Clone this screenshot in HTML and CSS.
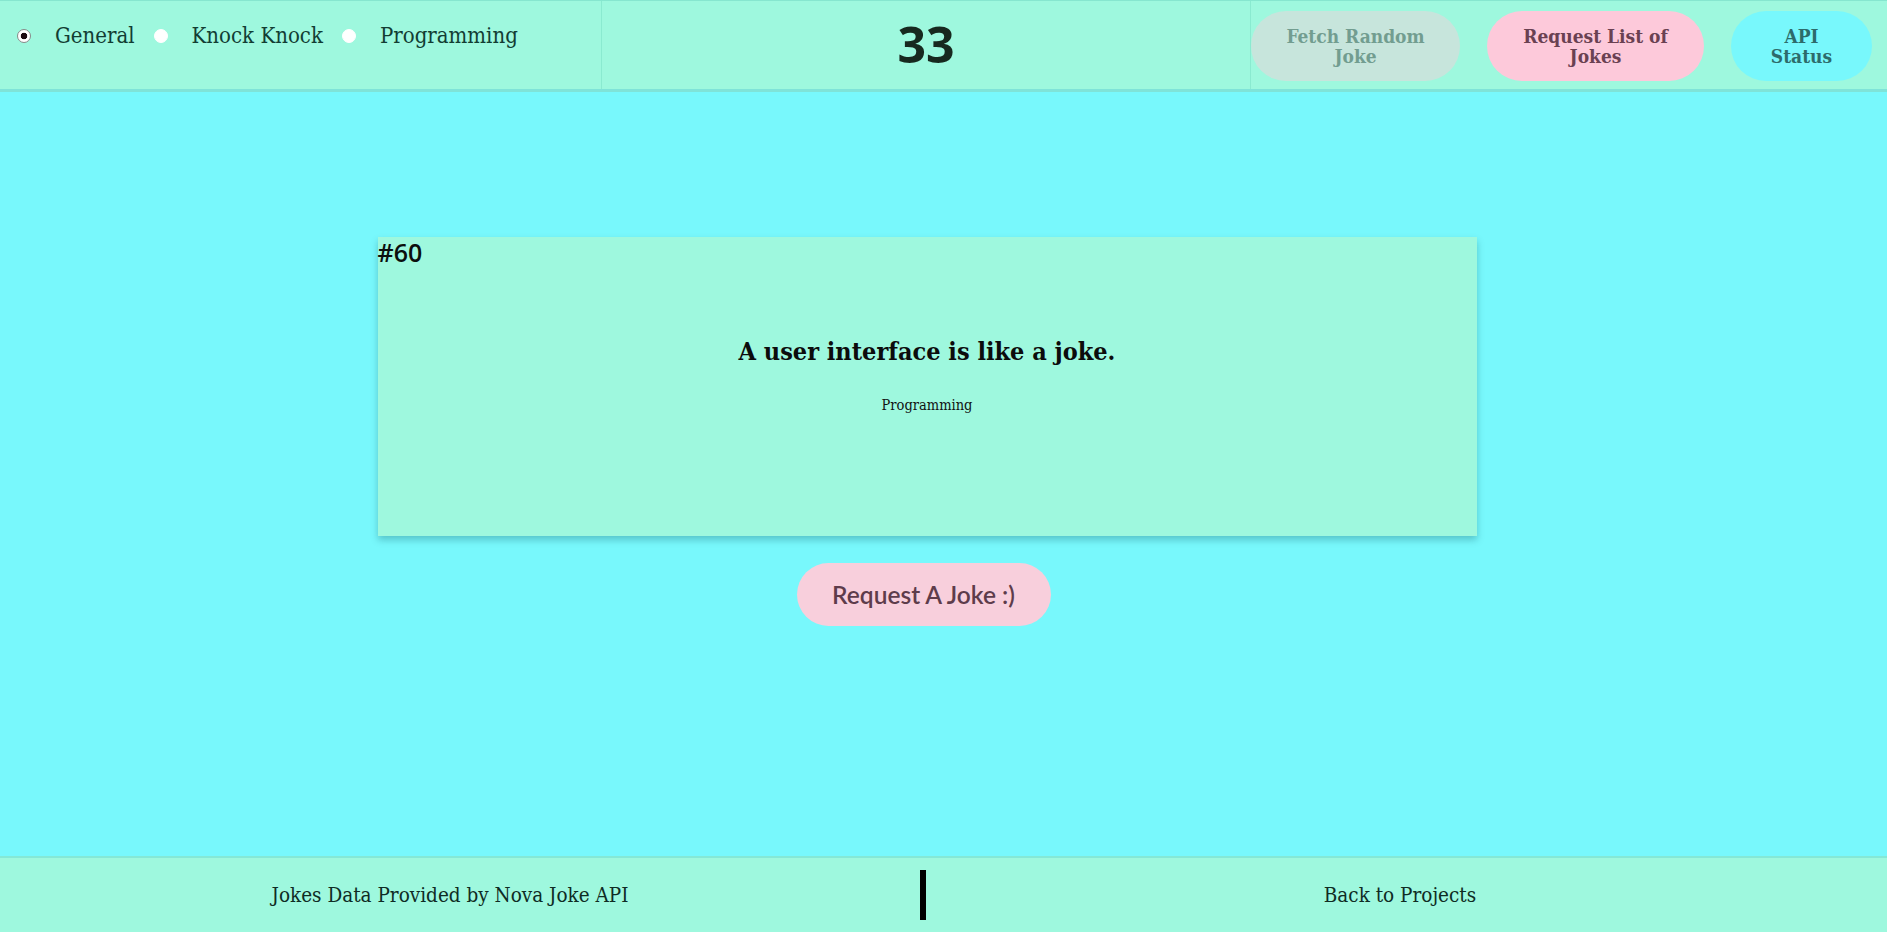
FILE: index.html
```html
<!DOCTYPE html>
<html lang="en">
<head>
<meta charset="utf-8">
<title>Jokes</title>
<link rel="stylesheet" href="styles.css">
</head>
<body>
<header class="topbar">
  <div class="topbar__types">
    <label class="type"><input type="radio" name="type" class="type__radio" checked><span class="type__label">General</span></label>
    <label class="type"><input type="radio" name="type" class="type__radio"><span class="type__label">Knock Knock</span></label>
    <label class="type"><input type="radio" name="type" class="type__radio"><span class="type__label">Programming</span></label>
  </div>
  <div class="topbar__count">33</div>
  <div class="topbar__actions">
    <button class="pill pill--fetch">Fetch Random Joke</button>
    <button class="pill pill--list">Request List of Jokes</button>
    <button class="pill pill--status">API Status</button>
  </div>
</header>
<main class="stage">
  <article class="card">
    <div class="card__id">#60</div>
    <div class="card__body">
      <h2 class="card__setup">A user interface is like a joke.</h2>
      <p class="card__type">Programming</p>
    </div>
  </article>
  <button class="request">Request A Joke :)</button>
</main>
<footer class="footer">
  <div class="footer__cell">Jokes Data Provided by Nova Joke API</div>
  <div class="footer__bar"><span class="footer__pipe"></span></div>
  <div class="footer__cell">Back to Projects</div>
</footer>
</body>
</html>
```
FILE: styles.css
```css
* { box-sizing: border-box; }
html, body { height: 100%; }
body {
  margin: 0;
  background: #78f8fc;
  font-family: "DejaVu Serif Condensed", "DejaVu Serif", serif;
  color: #123a30;
  display: flex;
  flex-direction: column;
  height: 932px;
  overflow: hidden;
}
.topbar {
  display: grid;
  grid-template-columns: 602px 649px 1fr;
  height: 92px;
  background: #9ef8de;
  border-top: 1px solid #86e6cf;
  border-bottom: 3px solid #7fe3d8;
}
.topbar__types {
  display: flex;
  align-items: flex-start;
  padding: 21px 0 0 17px;
  border-right: 1px solid #8aead0;
}
.type {
  display: flex;
  align-items: center;
  margin-right: 19px;
}
.type__radio {
  appearance: none;
  -webkit-appearance: none;
  width: 14px;
  height: 14px;
  margin: 0 24px 0 0;
  border-radius: 50%;
  background: #fff;
  border: 1px solid #fff;
}
.type__radio:checked {
  border: 1px solid #8a8a8a;
  background: radial-gradient(circle, #1a0a10 0 3px, #fff 3.6px);
}
.type__label {
  font-size: 22px;
  line-height: 28px;
  color: #123d33;
}
.topbar__count {
  display: flex;
  justify-content: center;
  align-items: center;
  font-family: "Open Sans", sans-serif;
  font-weight: 700;
  font-size: 50px;
  color: #17291f;
  border-right: 1px solid #8aead0;
  padding-bottom: 2px;
}
.topbar__actions {
  display: flex;
  align-items: center;
  gap: 27px;
  padding-top: 2px;
}
.pill {
  border: none;
  height: 70px;
  border-radius: 35px;
  font-family: "DejaVu Serif Condensed", "DejaVu Serif", serif;
  font-size: 19px;
  line-height: 20px;
  font-weight: 700;
  padding: 0 20px;
}
.pill--fetch { width: 209px; background: #c7e5dc; color: #729d90; padding: 0 30px; }
.pill--list { width: 217px; background: #fdc9da; color: #6a4152; padding: 0 30px; }
.pill--status { width: 141px; background: #78f8fc; color: #2d6b6b; padding: 0 36px; }

.stage {
  flex: 1;
  display: flex;
  flex-direction: column;
  align-items: center;
  padding: 145px 33px 0 0;
}
.card {
  width: 1099px;
  height: 299px;
  background: #9ef8de;
  box-shadow: 0 4px 7px rgba(0, 70, 80, 0.28);
  display: flex;
  flex-direction: column;
}
.card__id {
  font-family: "Open Sans", sans-serif;
  font-weight: 600;
  font-size: 25px;
  line-height: 28px;
  color: #0b0f0d;
  padding-top: 1px;
}
.card__body {
  text-align: center;
  padding-top: 69px;
}
.card__setup {
  margin: 0;
  font-size: 25px;
  line-height: 34px;
  font-weight: 700;
  color: #0c0c0c;
}
.card__type {
  margin: 28px 0 0;
  font-size: 14.5px;
  color: #111;
}
.request {
  margin: 27px 7px 0 0;
  width: 254px;
  height: 63px;
  border: none;
  border-radius: 32px;
  background: #f8cfdc;
  color: #5e3c4b;
  font-family: Lato, sans-serif;
  font-size: 24.5px;
  font-weight: 600;
}
.footer {
  height: 76px;
  display: grid;
  grid-template-columns: 900px 46px 908px;
  align-items: center;
  background: #9ef8de;
  border-top: 2px solid #84e8d6;
}
.footer__cell {
  text-align: center;
  font-size: 20.5px;
  color: #0f2c24;
}
.footer__bar {
  display: flex;
  justify-content: center;
}
.footer__pipe {
  width: 6px;
  height: 50px;
  background: #000;
}
```
